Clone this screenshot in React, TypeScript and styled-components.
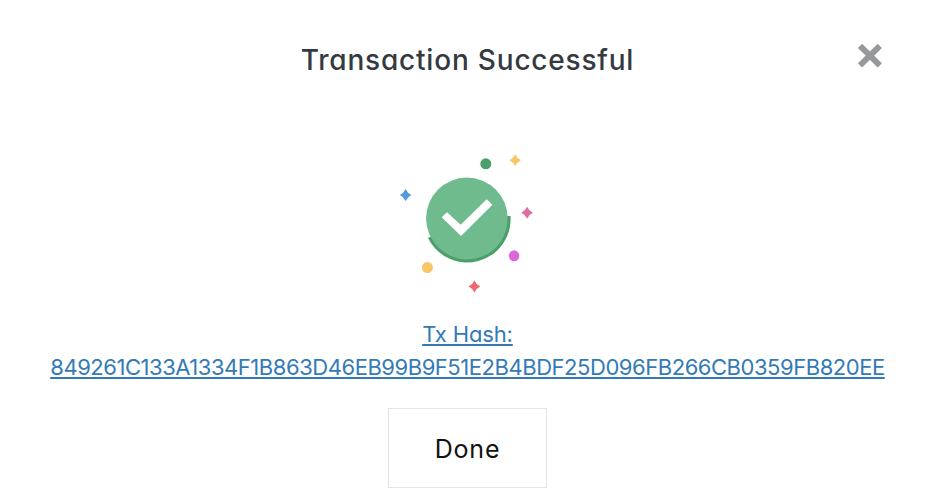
import React from 'react';
import styled, { createGlobalStyle } from 'styled-components';

const GlobalStyle = createGlobalStyle`
  * { box-sizing: border-box; }
  body {
    margin: 0;
    background: #ffffff;
    font-family: Inter, 'Open Sans', sans-serif;
    font-feature-settings: 'cv11' 1;
  }
`;

const Dialog = styled.main`
  display: flex;
  flex-direction: column;
  align-items: center;
  width: 935px;
  height: 502px;
  overflow: hidden;
`;

const Header = styled.header`
  display: grid;
  grid-template-columns: 1fr auto 1fr;
  width: 100%;
  height: 150px;
  padding: 40px 52px 0;
`;

const Title = styled.h1`
  grid-column: 2;
  margin: 0;
  font-size: 28px;
  line-height: 40px;
  font-weight: 500;
  letter-spacing: 0.8px;
  white-space: nowrap;
  color: #343a40;
`;

const CloseButton = styled.button`
  justify-self: end;
  width: 26px;
  height: 26px;
  margin-top: 3px;
  padding: 0;
  border: 0;
  background: none;
  svg { display: block; }
`;

const Celebration = styled.svg`
  flex: none;
  display: block;
  width: 141px;
  height: 146px;
`;

const HashLink = styled.a`
  display: flex;
  flex-direction: column;
  align-items: center;
  margin-top: 22px;
  font-size: 22px;
  line-height: 33px;
  font-weight: 400;
  color: #337ab7;
  cursor: pointer;
`;

const HashLine = styled.span<{ $spacing: number }>`
  letter-spacing: ${({ $spacing }) => $spacing}px;
  white-space: nowrap;
  text-decoration: underline;
  text-decoration-thickness: 2px;
  text-underline-offset: 2px;
  text-decoration-skip-ink: none;
`;

const DoneButton = styled.button`
  flex: none;
  width: 159px;
  height: 80px;
  margin-top: 24px;
  padding: 1px 0 0;
  border: 1px solid #e2e1f4;
  background: #ffffff;
  color: #111111;
  font: inherit;
  font-size: 25px;
  font-weight: 400;
  letter-spacing: 0.8px;
`;

const sparkles = [
  { x: 515.2, y: 160.3, fill: '#f6c667' },
  { x: 405.6, y: 195, fill: '#5596e0' },
  { x: 527.1, y: 212.7, fill: '#df6fa0' },
  { x: 474.4, y: 286.6, fill: '#ec6b6e' },
];

export default function App() {
  return (
    <>
      <GlobalStyle />
      <Dialog>
        <Header>
          <Title>Transaction Successful</Title>
          <CloseButton aria-label="Close">
            <svg width="26" height="26" viewBox="0 0 26 26">
              <path d="M3 2.9 22.8 22.4M22.8 2.9 3 22.4" stroke="#96989c" strokeWidth="6" />
            </svg>
          </CloseButton>
        </Header>
        <Celebration viewBox="397 150 141 146" aria-hidden="true">
          <circle cx="466.9" cy="218.4" r="40.8" fill="#6fbb8e" />
          <path
            d="M509 216A42 42 0 0 1 429.4 237.4"
            fill="#6fbb8e"
            stroke="#4b9f69"
            strokeWidth="3.1"
          />
          <path
            d="M441.7 217.3 447 212.3 460.7 224.7 486.7 199.2 492.4 204.7 461 236.1Z"
            fill="#fff"
          />
          <circle cx="485.8" cy="163.8" r="5.5" fill="#4b9f69" />
          <circle cx="427.4" cy="267.5" r="5.5" fill="#f6c667" />
          <ellipse cx="514.1" cy="255.8" rx="5.2" ry="5.5" fill="#d966dd" />
          {sparkles.map(({ x, y, fill }) => (
            <path
              key={fill}
              transform={`translate(${x} ${y})`}
              d="M0-6Q1.8-1.8 5.8 0 1.8 1.8 0 6-1.8 1.8-5.8 0-1.8-1.8 0-6Z"
              fill={fill}
            />
          ))}
        </Celebration>
        <HashLink>
          <HashLine $spacing={-0.15}>Tx Hash:</HashLine>
          <HashLine $spacing={-0.456}>
            849261C133A1334F1B863D46EB99B9F51E2B4BDF25D096FB266CB0359FB820EE
          </HashLine>
        </HashLink>
        <DoneButton>Done</DoneButton>
      </Dialog>
    </>
  );
}
